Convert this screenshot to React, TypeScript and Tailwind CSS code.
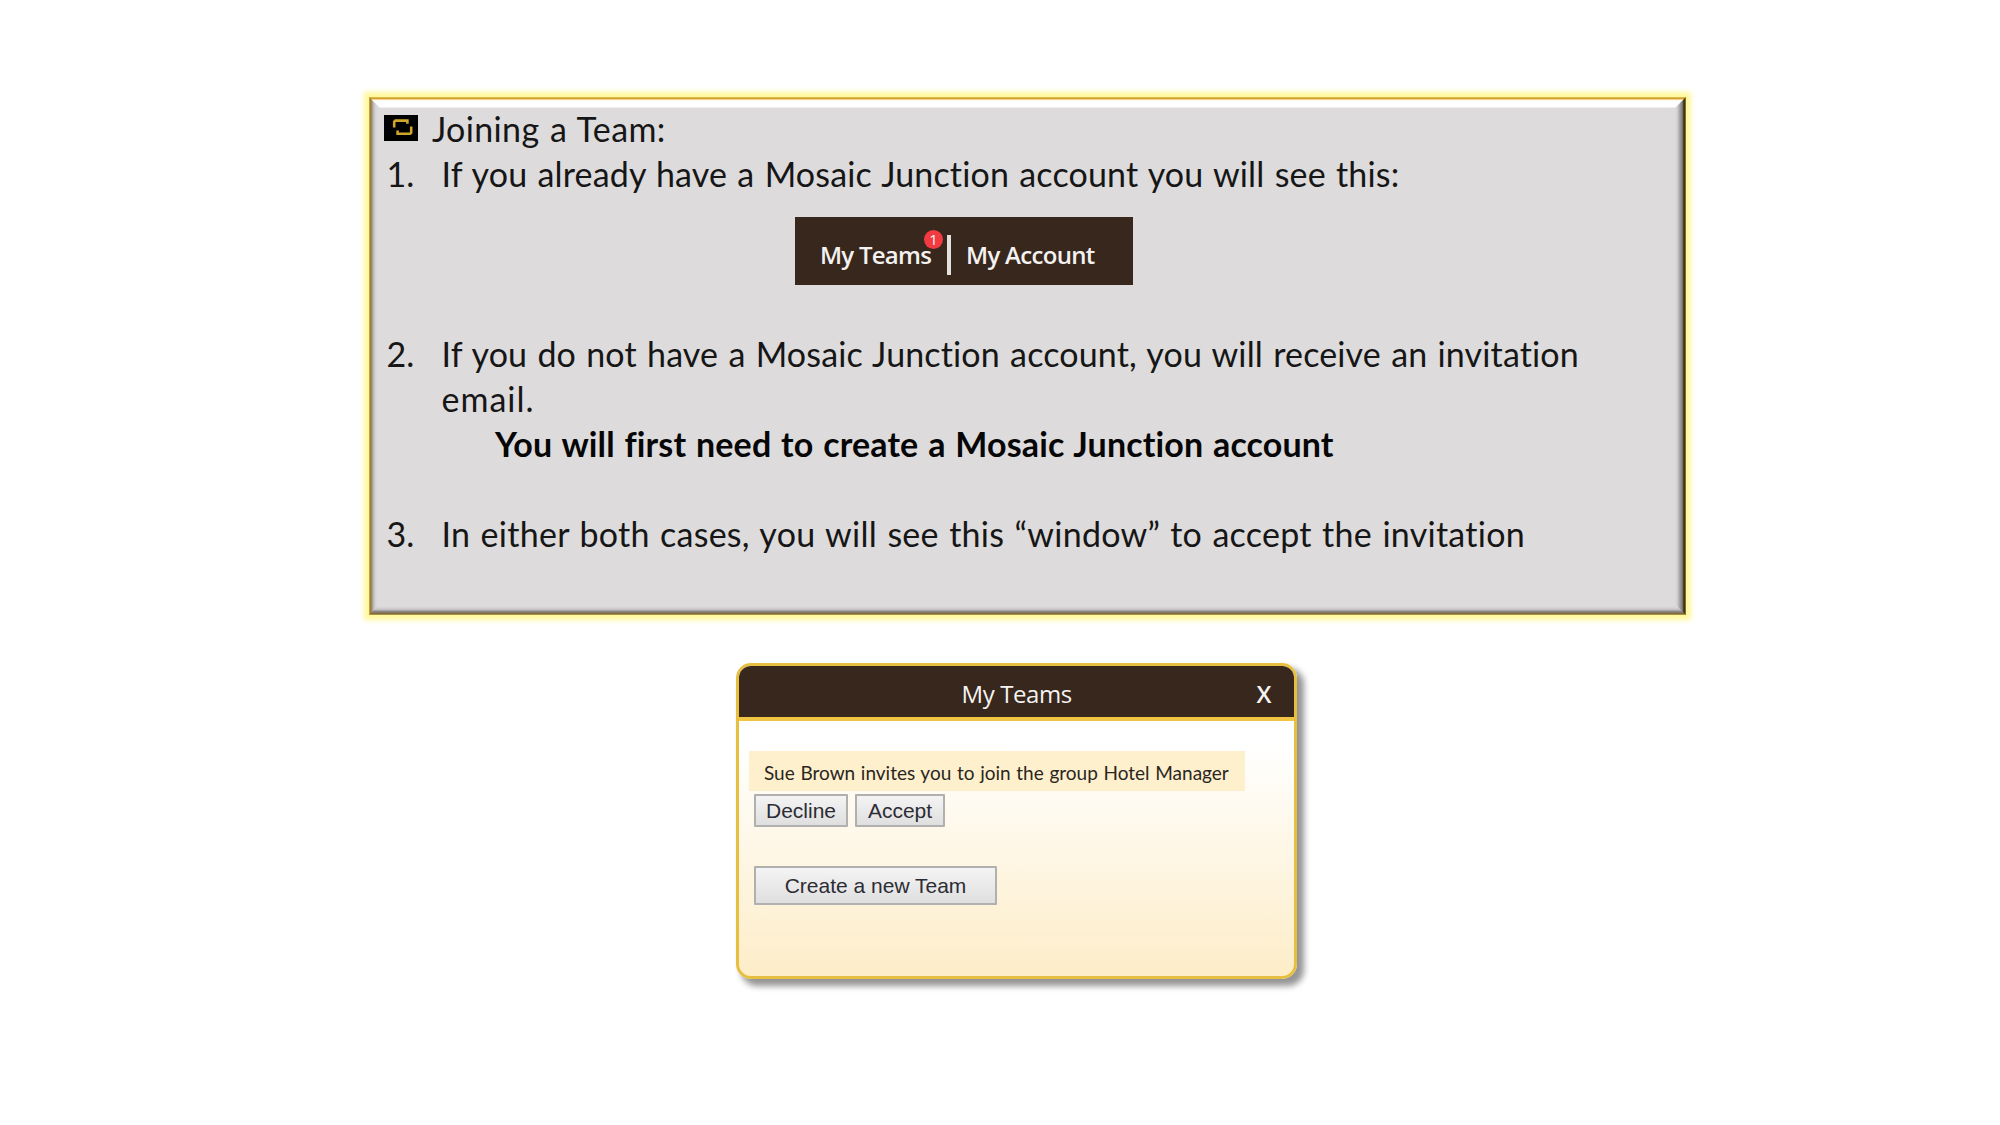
import type { ReactNode } from "react";

/* One-pixel rings, outermost first; together they form the raised edge of the panel. */
const rings = [
  "border-t-[#dcbb50] border-r-[#7d6c2c] border-b-[#a8914a] border-l-[#c0a24e]",
  "border-t-[#cf9d2e] border-r-[#42330c] border-b-[#7d6a35] border-l-[#a07c30]",
  "border-t-[#fbd48c] border-r-[#4b4226] border-b-[#857b69] border-l-[#a18a5c]",
  "border-t-[#fffaf0] border-r-[#777274] border-b-[#8a8588] border-l-[#aaa09a]",
  "border-t-white border-r-[#8a888a] border-b-[#a8a5a7] border-l-[#bab7b9]",
  "border-t-white border-r-[#9a989a] border-b-[#c4c2c3] border-l-[#cbc9ca]",
  "border-t-white border-r-[#aaa8a9] border-b-[#cecccd] border-l-[#d3d1d2]",
  "border-t-white border-r-[#bcbabb] border-b-[#d6d4d5] border-l-[#d9d7d8]",
  "border-t-white border-r-[#cccacb] border-b-[#dbd9da] border-l-[#dddbdc]",
  "border-t-white border-r-[#d6d4d5] border-b-[#dddbdc] border-l-[#dddbdc]",
  "border-t-[#f0efef] border-r-[#dad8d9] border-b-[#dddbdc] border-l-[#dddbdc]",
];

function Bevel({ depth = 0, children }: { depth?: number; children: ReactNode }) {
  if (depth === rings.length) return <div className="flow-root h-full bg-[#dddbdc]">{children}</div>;
  return (
    <div className={`h-full border ${rings[depth]}`}>
      <Bevel depth={depth + 1}>{children}</Bevel>
    </div>
  );
}

function LoopIcon() {
  return (
    <svg viewBox="0 0 34 26" className="h-[26px] w-[34px] bg-black" fill="none" stroke="#cfa62a" strokeWidth="2.6">
      <path d="M23.4 8.8V5.6H11.4L10.2 6.8V12.6" />
      <path d="M13.6 15.6V18.8H26L27.2 17.6V11.4" />
    </svg>
  );
}

function Step({ n, children }: { n: string; children: ReactNode }) {
  return (
    <li className="flex pl-[2.5px]">
      <span className="w-[55px] shrink-0">{n}</span>
      <div>{children}</div>
    </li>
  );
}

function NavPreview() {
  return (
    <div className="ml-[411px] flex h-[68px] w-[338px] items-start bg-[#38271d] font-['Open_Sans',sans-serif] text-[24px] leading-[32px] font-semibold text-[#f4f2f0] [word-spacing:0px]">
      <span className="relative mt-[22px] ml-[25px] w-[127px] tracking-[-0.75px] whitespace-nowrap">
        My Teams
        <span className="absolute top-[-9px] left-[104px] flex size-[19px] items-center justify-center rounded-full bg-[#f23a42] text-[15px] leading-none font-normal tracking-normal">
          1
        </span>
      </span>
      <span className="mt-[18px] h-[40px] w-[4px] bg-[#e4e0dc]" />
      <span className="mt-[22px] ml-[15px] tracking-[-0.7px] whitespace-nowrap">My Account</span>
    </div>
  );
}

function GrayButton({ className, children }: { className: string; children: ReactNode }) {
  return (
    <button
      className={`flex items-center justify-center rounded-[1px] border-2 border-[#b0b0ae] bg-linear-to-b from-[#f4f4f4] to-[#dfdfe0] font-['Liberation_Sans',sans-serif] text-[21px] leading-none whitespace-nowrap text-[#2c2c34] ${className}`}
    >
      {children}
    </button>
  );
}

export default function App() {
  return (
    <main className="flex h-[1125px] w-[2000px] flex-col overflow-hidden bg-white font-['Lato',sans-serif] [font-variant-ligatures:none]">
      <section className="mt-[97px] ml-[369px] h-[518px] w-[1317px] shadow-[0_0_5px_5px_#fff89a]">
        <Bevel>
          <div className="-mt-[2px] ml-[4px] text-[34px] leading-[45px] whitespace-nowrap text-[#161616] [word-spacing:1.4px]">
            <h1 className="flex">
              <span className="mt-[9px] h-[26px] w-[48px]">
                <LoopIcon />
              </span>
              <span className="tracking-[0.35px]">Joining a Team:</span>
            </h1>
            <ol>
              <Step n="1.">
                <span className="tracking-[0.15px]">If you already have a Mosaic Junction account you will see this:</span>
              </Step>
              <li className="h-[135px] pt-[21px]">
                <NavPreview />
              </li>
              <Step n="2.">
                <p className="tracking-[0.14px]">
                  If you do not have a Mosaic Junction account, you will receive an invitation
                </p>
                <p className="tracking-[1px]">email.</p>
                <p className="ml-[53.5px] font-bold tracking-[0.13px] text-[#060606]">
                  You will first need to create a Mosaic Junction account
                </p>
              </Step>
              <li className="h-[45px]" />
              <Step n="3.">
                <span className="tracking-[0.26px]">In either both cases, you will see this “window” to accept the invitation</span>
              </Step>
            </ol>
          </div>
        </Bevel>
      </section>

      <section className="mt-[48px] ml-[736px] flex h-[316px] w-[561px] flex-col overflow-hidden rounded-[15px] border-[3px] border-[#e6bf40] bg-linear-to-b from-white from-25% to-[#fdedc8] shadow-[6px_6px_6px_1px_rgba(0,0,0,0.42)]">
        <header className="flex h-[55px] shrink-0 border-b-[4px] border-[#f0c544] bg-[#38271d] pt-[12px] font-['Open_Sans',sans-serif] text-[24px] leading-[32px] text-[#f5f3f1]">
          <h2 className="ml-[222.5px] w-[295px] font-medium tracking-[-0.4px]">My Teams</h2>
          <span className="font-semibold">X</span>
        </header>
        <p className="mt-[30px] ml-[10px] h-[40px] w-[496px] bg-[#fff0cd] pl-[15px] text-[19px] leading-[43px] whitespace-nowrap text-[#2a261e] [word-spacing:0.8px]">
          Sue Brown invites you to join the group Hotel Manager
        </p>
        <div className="mt-[3px] ml-[15px] flex gap-[7px]">
          <GrayButton className="h-[33px] w-[94px]">Decline</GrayButton>
          <GrayButton className="h-[33px] w-[90px]">Accept</GrayButton>
        </div>
        <GrayButton className="mt-[39px] ml-[15px] h-[39px] w-[243px]">Create a new Team</GrayButton>
      </section>
    </main>
  );
}
